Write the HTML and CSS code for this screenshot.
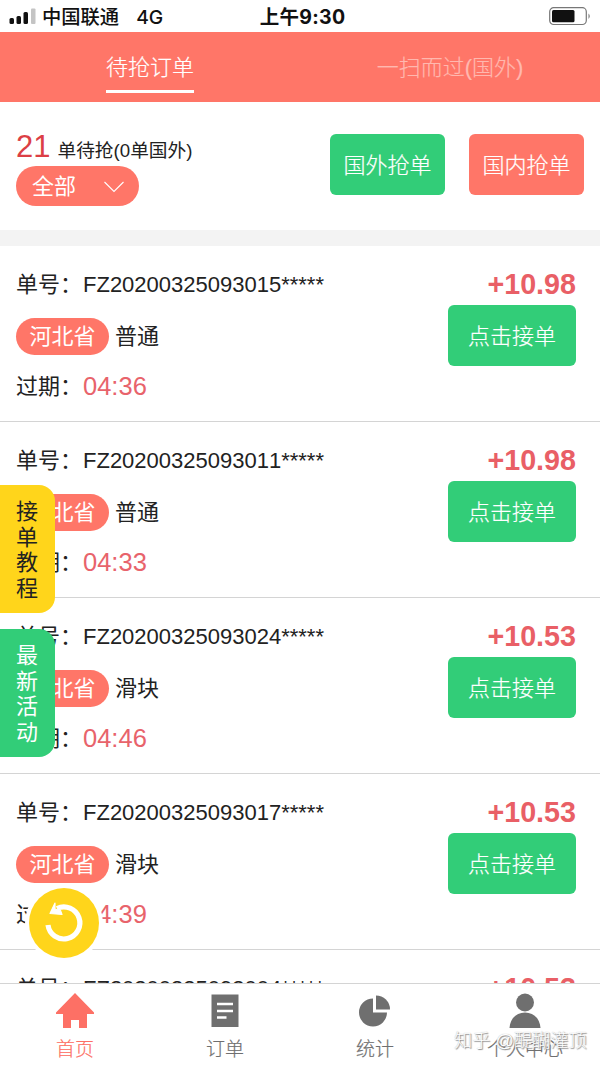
FILE: index.html
```html
<!DOCTYPE html>
<html lang="zh-CN">
<head>
<meta charset="utf-8">
<title>待抢订单</title>
<link rel="stylesheet" href="styles.css">
</head>
<body>
<div class="app">
  <div class="status">
    <div class="carrier">
      <svg class="signal" width="27" height="18" viewBox="0 0 27 18"><rect x="0.5" y="11" width="4.5" height="6" rx="1.5"/><rect x="7.5" y="9" width="4.5" height="8" rx="1.5"/><rect x="14.5" y="5" width="4.5" height="12" rx="1.5"/><rect x="22" y="1.500" width="4.500" height="15.500" rx="1" fill="#c4c4c4"/></svg>
      <span class="status-text">中国联通</span><span class="status-text network">4G</span>
    </div>
    <div class="clock">上午9:30</div>
    <svg class="battery" width="43" height="19" viewBox="0 0 43 19"><rect x="0.700" y="0.700" width="36.600" height="16.800" rx="4" fill="#fff" stroke="#777" stroke-width="1.200"/><rect x="3" y="3" width="22.500" height="12.300" rx="1.500"/><path d="M39.500 6.500Q42 9 39.500 12Z" fill="#777"/></svg>
  </div>
  <div class="tabs">
    <div class="tab"><span class="tab-label active">待抢订单</span></div>
    <div class="tab"><span class="tab-label">一扫而过(国外)</span></div>
  </div>
  <div class="summary">
    <div class="summary-info">
      <div class="count"><span class="count-number">21</span><span>单待抢(0单国外)</span></div>
      <div class="filter"><span>全部</span><svg width="20" height="12" viewBox="0 0 20 12"><path d="M.5 1 10 10.500 19.500 1" fill="none" stroke="#fff" stroke-width="1.100"/></svg></div>
    </div>
    <div class="actions"><div class="button grab foreign">国外抢单</div><div class="button grab domestic">国内抢单</div></div>
  </div>
  <div class="orders">
    <div class="order">
      <div class="details"><div class="line"><span>单号：</span><span>FZ20200325093015*****</span></div><div class="line kind"><span class="province">河北省</span><span>普通</span></div><div class="line expiry"><span>过期：</span><span class="time">04:36</span></div></div>
      <div class="offer"><div class="price">+10.98</div><div class="button accept">点击接单</div></div>
    </div>
    <div class="order">
      <div class="details"><div class="line"><span>单号：</span><span>FZ20200325093011*****</span></div><div class="line kind"><span class="province">河北省</span><span>普通</span></div><div class="line expiry"><span>过期：</span><span class="time">04:33</span></div></div>
      <div class="offer"><div class="price">+10.98</div><div class="button accept">点击接单</div></div>
    </div>
    <div class="order">
      <div class="details"><div class="line"><span>单号：</span><span>FZ20200325093024*****</span></div><div class="line kind"><span class="province">河北省</span><span>滑块</span></div><div class="line expiry"><span>过期：</span><span class="time">04:46</span></div></div>
      <div class="offer"><div class="price">+10.53</div><div class="button accept">点击接单</div></div>
    </div>
    <div class="order">
      <div class="details"><div class="line"><span>单号：</span><span>FZ20200325093017*****</span></div><div class="line kind"><span class="province">河北省</span><span>滑块</span></div><div class="line expiry"><span>过期：</span><span class="time">04:39</span></div></div>
      <div class="offer"><div class="price">+10.53</div><div class="button accept">点击接单</div></div>
    </div>
    <div class="order">
      <div class="details"><div class="line"><span>单号：</span><span>FZ20200325093004*****</span></div></div>
      <div class="offer"><div class="price">+10.53</div></div>
    </div>
  </div>
  <div class="nav">
    <div class="nav-item current"><svg width="38" height="36" viewBox="0 0 38 36"><path d="M19 0 0 19.500V21H7V35H15V27H23V35H31V21H38V19.500Z"/></svg><span>首页</span></div>
    <div class="nav-item"><svg width="38" height="36" viewBox="0 0 38 36"><path d="M5.500 1.500H32.500V34H5.500Z"/><path d="M11 11H27M11 18H27M11 24.500H20.500" stroke="#fff" stroke-width="2.300"/></svg><span>订单</span></div>
    <div class="nav-item"><svg width="38" height="36" viewBox="0 0 38 36"><path d="M17 5.500V19.500H31A14 14 0 1 1 17 5.500Z"/><path d="M20 2.500A14 14 0 0 1 34 16.500H20Z"/></svg><span>统计</span></div>
    <div class="nav-item"><svg width="38" height="36" viewBox="0 0 38 36"><circle cx="19" cy="9.500" r="9"/><path d="M3.500 35C4 26 10 19.500 19 19.500S34 26 34.500 35Z"/></svg><span>个人中心</span></div>
  </div>
  <div class="side-tag tutorial">接单教程</div>
  <div class="side-tag activity">最新活动</div>
  <div class="refresh"><svg width="70" height="70" viewBox="0 0 70 70"><path d="M28 20.500A16 16 0 1 1 19 37" fill="none" stroke="#fff" stroke-width="5.200"/><path d="M26 15 21 25.500 33 26.500 31.500 22.500 26 21Z" fill="#fff" stroke="#fff" stroke-width="1.200" stroke-linejoin="round"/></svg></div>
  <div class="watermark">知乎 @醍醐灌顶</div>
</div>
</body>
</html>
```
FILE: styles.css
```css
* { box-sizing: border-box; }
body { margin: 0; background: #fff; }
.app { position: relative; width: 600px; height: 1067px; overflow: hidden; display: flex; flex-direction: column; font: 22px/1 "Liberation Sans", "Noto Sans CJK SC", sans-serif; font-kerning: none; color: #222; white-space: nowrap; }
svg { display: block; fill: currentColor; flex: none; }
.status { height: 32px; flex: none; display: grid; grid-template-columns: 1fr auto 1fr; align-items: center; padding: 0 8px 0 9px; color: #111; font-family: Inter, "Noto Sans CJK SC", sans-serif; font-size: 19.300px; font-weight: 500; }
.carrier { display: flex; align-items: center; }
.signal { margin-right: 6px; }
.status-text { padding-top: 3px; }
.network { margin-left: 17px; }
.clock { font-weight: 700; font-size: 19.500px; letter-spacing: .3px; padding: 3px 0 0 4px; }
.battery { justify-self: end; }
.tabs { height: 70px; flex: none; display: grid; grid-template-columns: 1fr 1fr; background: #ff7668; color: #fff; }
.tab { display: flex; justify-content: center; padding-top: 13px; }
.tab-label { height: 48px; padding-top: 12px; font-weight: 300; color: #ffb8af; -webkit-text-stroke: .2px currentColor; }
.tab-label.active { border-bottom: 3px solid #fff; color: #fff; }
.summary { height: 144px; flex: none; display: flex; justify-content: space-between; padding: 32px 16px 0; border-bottom: 16px solid #f3f3f3; }
.count { display: flex; align-items: baseline; gap: 7px; height: 32px; font-size: 18.700px; }
.count-number { font-size: 31px; line-height: 26px; color: #dc3f45; }
.filter { width: 123px; height: 40px; border-radius: 20px; background: #ff7668; color: #fff; display: flex; align-items: center; justify-content: space-between; padding: 2px 15px 0 16px; }
.actions { display: flex; gap: 24px; }
.button { height: 61px; padding-top: 2px; border-radius: 6px; display: flex; align-items: center; justify-content: center; color: #fff; background: #32cd78; font-weight: 300; -webkit-text-stroke: .2px #fff; }
.grab { width: 115px; }
.domestic { background: #ff7668; }
.orders { flex: 1; min-height: 0; overflow: hidden; }
.order { height: 176px; border-bottom: 1px solid #d4d4d4; display: flex; justify-content: space-between; padding: 16px 24px 0 16px; }
.line { height: 44px; padding-top: 2px; display: flex; align-items: center; }
.line.kind { height: 60px; gap: 6px; }
.line.expiry { height: 42px; padding: 0; }
.line > span:first-child:not(.province) { width: 67px; }
.line > .province { width: 93px; height: 37px; margin-top: -2px; padding-top: 2px; border-radius: 19px; background: #ff7668; color: #fff; display: flex; align-items: center; justify-content: center; }
.time { font-size: 25.500px; color: #e8636b; }
.offer { width: 128px; }
.price { height: 43px; line-height: 44px; text-align: right; font-size: 28.700px; font-weight: 700; color: #e95f66; }
.nav { height: 84px; flex: none; border-top: 1px solid #d4d4d4; display: grid; grid-template-columns: repeat(4, 1fr); background: #fff; color: #6f6f6f; font-size: 19px; font-weight: 300; -webkit-text-stroke: .2px currentColor; }
.nav-item { display: flex; flex-direction: column; align-items: center; gap: 11px; padding-top: 9px; }
.current { color: #fd7065; }
.side-tag { position: absolute; left: 0; width: 55px; height: 128px; border-radius: 0 16px 16px 0; padding: 14px 17px 0 16px; white-space: normal; word-break: break-all; line-height: 25.500px; }
.tutorial { top: 485px; background: #ffd51b; }
.activity { top: 629px; background: #32cd78; color: #fff; }
.refresh { position: absolute; left: 29px; top: 888px; border-radius: 50%; background: #ffd51b; box-shadow: 0 0 0 4px #fff; }
.watermark { position: absolute; left: 454px; top: 1032px; font-size: 18.200px; font-weight: 300; color: #fff; text-shadow: 1px 1px 1px #888, 0 0 1px #aaa; }
```
